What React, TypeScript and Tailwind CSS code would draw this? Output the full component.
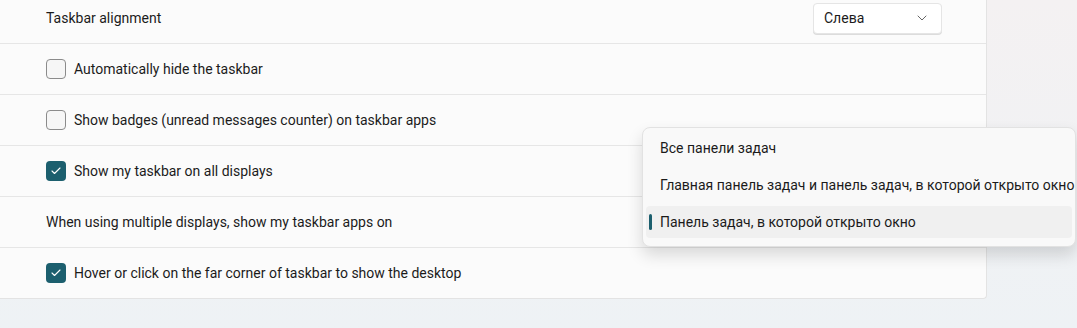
import { ChevronDown, Check } from 'lucide-react';

const font = { fontFamily: 'Roboto, "Noto Sans", sans-serif' };

function Box({ checked }: { checked?: boolean }) {
  return checked ? (
    <span className="flex h-[20px] w-[20px] items-center justify-center rounded-[4px] bg-[#1c5f6e]">
      <Check className="h-[12px] w-[12px] text-white" strokeWidth={2.2} />
    </span>
  ) : (
    <span className="h-[20px] w-[20px] rounded-[4px] border border-[#8b8b8b] bg-[#f6f6f6]" />
  );
}

function Row({ children }: { children: React.ReactNode }) {
  return (
    <div className="flex h-[51px] items-center border-b border-[#e6e6e6] pl-[46px] pr-[44px] text-[14px] text-[#1b1b1b]">
      {children}
    </div>
  );
}

export default function App() {
  const items = [
    'Все панели задач',
    'Главная панель задач и панель задач, в которой открыто окно',
    'Панель задач, в которой открыто окно',
  ];
  return (
    <div className="relative h-[328px] w-[1077px] overflow-hidden bg-gradient-to-b from-[#f4f1f2] to-[#eef2f5]" style={font}>
      <div className="-mt-[7px] w-[987px] rounded-br-[4px] border-r border-b border-[#e3e3e3] bg-[#fbfbfb]">
        <Row>
          <span className="flex-1">Taskbar alignment</span>
          <button className="flex h-[31px] w-[129px] items-center justify-between rounded-[4px] border border-[#e5e5e5] bg-white pl-[10px] pr-[11px] text-[14px] shadow-[0_1px_0_#dcdcdc]">
            Слева
            <ChevronDown className="h-[16px] w-[16px] text-[#5a5a5a]" strokeWidth={1.4} />
          </button>
        </Row>
        <Row>
          <Box />
          <span className="ml-[8px]">Automatically hide the taskbar</span>
        </Row>
        <Row>
          <Box />
          <span className="ml-[8px]">Show badges (unread messages counter) on taskbar apps</span>
        </Row>
        <Row>
          <Box checked />
          <span className="ml-[8px]">Show my taskbar on all displays</span>
        </Row>
        <Row>
          <span>When using multiple displays, show my taskbar apps on</span>
        </Row>
        <div className="flex h-[50px] items-center pl-[46px] text-[14px] text-[#1b1b1b]">
          <Box checked />
          <span className="ml-[8px]">Hover or click on the far corner of taskbar to show the desktop</span>
        </div>
      </div>

      <div className="absolute left-[642px] top-[127px] flex h-[120px] w-[434px] flex-col gap-[5px] rounded-[8px] border border-[#e2e2e2] bg-[#f9f9f9] px-[3px] pt-[4px] shadow-[0_8px_16px_rgba(0,0,0,0.14)]">
        {items.map((t, i) => (
          <div
            key={t}
            className={`relative flex h-[32px] items-center whitespace-nowrap rounded-[4px] pl-[14px] text-[14px] text-[#1b1b1b] ${i === 2 ? 'bg-[#f0f0f0]' : ''}`}
          >
            {i === 2 && <span className="absolute left-[3px] top-[8px] h-[16px] w-[3px] rounded-full bg-[#1c5f6e]" />}
            {t}
          </div>
        ))}
      </div>
    </div>
  );
}
